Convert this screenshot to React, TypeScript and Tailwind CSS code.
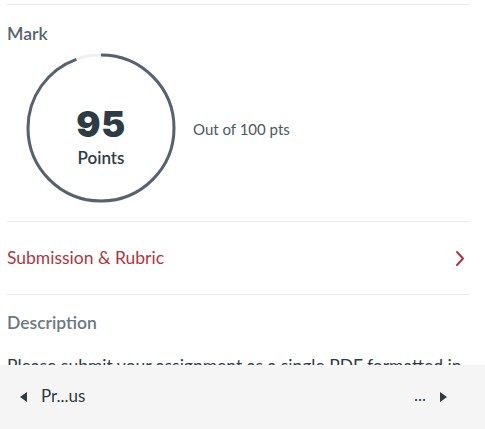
import React from "react";

const RADIUS = 73;
const CIRC = 2 * Math.PI * RADIUS;

function ScoreRing({ score, total }: { score: number; total: number }) {
  const pct = score / total;
  return (
    <div className="relative w-[152px] h-[152px] shrink-0">
      <svg className="absolute inset-0" width="152" height="152" viewBox="0 0 152 152">
        <circle cx="76" cy="76" r={RADIUS} fill="none" stroke="#eef0f1" strokeWidth="3" />
        <circle
          cx="76"
          cy="76"
          r={RADIUS}
          fill="none"
          stroke="#56636f"
          strokeWidth="3"
          strokeDasharray={`${CIRC * pct - 3} ${CIRC}`}
          transform="rotate(-90 76 76)"
        />
      </svg>
      <div className="absolute inset-0 flex flex-col items-center pt-[54px]">
        <span className="font-['Inter',sans-serif] font-black text-[36px] leading-[36px] text-[#2d3b45] tracking-[0.5px]">
          {score}
        </span>
        <span className="font-['Lato',sans-serif] font-semibold text-[17px] leading-[20px] text-[#2d3b45] mt-[6px]">
          Points
        </span>
      </div>
    </div>
  );
}

export default function App() {
  return (
    <div className="relative w-[485px] h-[429px] overflow-hidden bg-white font-['Lato',sans-serif]">
      <div className="ml-[7px] w-[462px] pt-[4px]">
        <div className="border-t border-[#e8eaec]" />

        {/* Mark */}
        <h2 className="mt-[19px] text-[17.5px] leading-[20px] font-semibold text-[#56636f]">Mark</h2>
        <div className="mt-[8px] ml-[18px] flex items-center gap-[16px]">
          <ScoreRing score={95} total={100} />
          <span className="text-[15px] leading-[20px] text-[#4b5862] mt-[2px]">Out of 100 pts</span>
        </div>

        <div className="mt-[17px] border-t border-[#e8eaec]" />

        {/* Submission & Rubric */}
        <div className="h-[72px] flex items-center justify-between pr-[4px]">
          <span className="text-[17.5px] leading-[20px] text-[#b03540]">Submission &amp; Rubric</span>
          <svg width="10" height="17" viewBox="0 0 10 17" fill="none" stroke="#b03540" strokeWidth="2" strokeLinecap="round" strokeLinejoin="round">
            <path d="M2 2l6 6.5L2 15" />
          </svg>
        </div>

        <div className="border-t border-[#e8eaec]" />

        {/* Description */}
        <h2 className="mt-[18px] text-[17.5px] leading-[20px] font-semibold text-[#6b7883]">Description</h2>
        <p className="mt-[21px] text-[17.5px] leading-[24px] text-[#2d3b45] whitespace-nowrap">
          Please submit your assignment as a single PDF formatted in
        </p>
      </div>

      {/* bottom nav */}
      <div className="absolute bottom-0 left-0 right-0 h-[64px] bg-[#f5f5f5] flex items-center justify-between px-[20px]">
        <div className="flex items-center gap-[14px]">
          <svg width="7" height="10" viewBox="0 0 7 10">
            <path d="M7 0v10L0 5z" fill="#2d3b45" />
          </svg>
          <span className="text-[17px] leading-[22px] text-[#2d3b45] mt-[-2px]">Pr...us</span>
        </div>
        <div className="flex items-center gap-[14px] pr-[18px]">
          <span className="text-[17px] leading-[22px] text-[#2d3b45] mt-[-4px]">...</span>
          <svg width="7" height="10" viewBox="0 0 7 10">
            <path d="M0 0v10l7-5z" fill="#2d3b45" />
          </svg>
        </div>
      </div>
    </div>
  );
}
